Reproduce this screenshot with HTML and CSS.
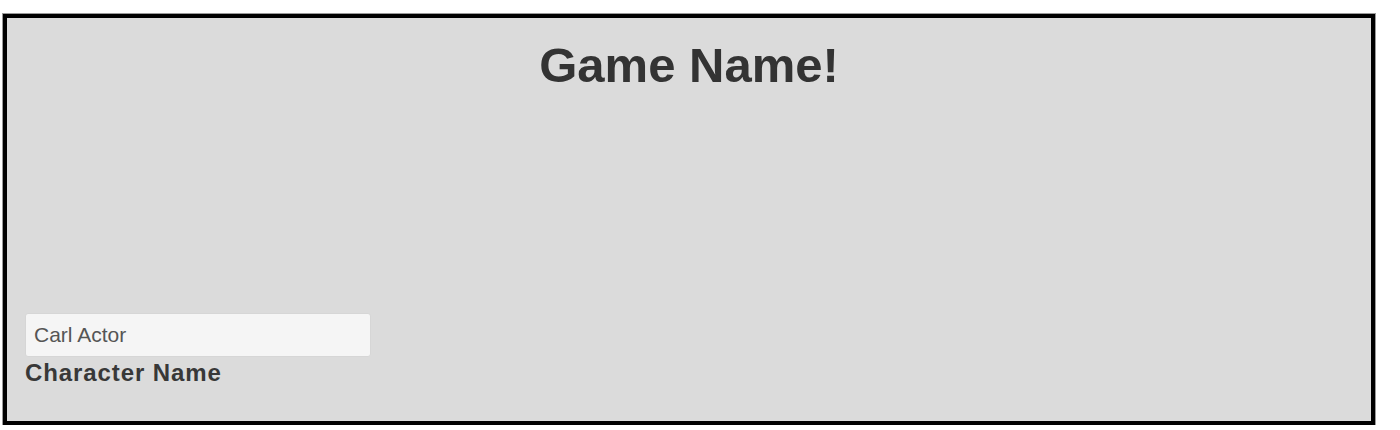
FILE: index.html
```html
<!DOCTYPE html>
<html>
<head>
<meta charset="utf-8">
<link rel="stylesheet" href="styles.css">
</head>
<body>
<div class="game">
  <h1 class="title">Game Name!</h1>
  <div class="field">
    <input class="name-input" type="text" value="Carl Actor">
    <label class="field-label">Character Name</label>
  </div>
</div>
</body>
</html>
```
FILE: styles.css
```css
html, body {
  margin: 0;
  padding: 0;
  background: #ffffff;
}
body {
  font-family: "Liberation Sans", Arial, sans-serif;
  color: #333333;
}
.game {
  box-sizing: border-box;
  margin: 14px 25px 0 3px;
  height: 411px;
  border: 4px solid #000000;
  box-shadow: 0 0 0 1px #9a9a9a;
  background: #dbdbdb;
  display: flex;
  flex-direction: column;
  padding: 0 18px 35px 18px;
}
.title {
  margin: 22px 0 0 0;
  font-size: 49px;
  line-height: 50px;
  font-weight: bold;
  text-align: center;
  color: #333333;
}
.field {
  margin-top: auto;
  display: flex;
  flex-direction: column;
  align-items: flex-start;
}
.name-input {
  box-sizing: border-box;
  width: 346px;
  height: 44px;
  margin: 0 0 3px 0;
  padding: 0 8px;
  border: 1px solid #d6d6d6;
  border-radius: 3px;
  background: #f5f5f5;
  font-family: "Liberation Sans", Arial, sans-serif;
  font-size: 21px;
  color: #555555;
  outline: none;
}
.field-label {
  font-size: 24px;
  line-height: 26px;
  letter-spacing: 0.9px;
  font-weight: bold;
  color: #383838;
}
```
